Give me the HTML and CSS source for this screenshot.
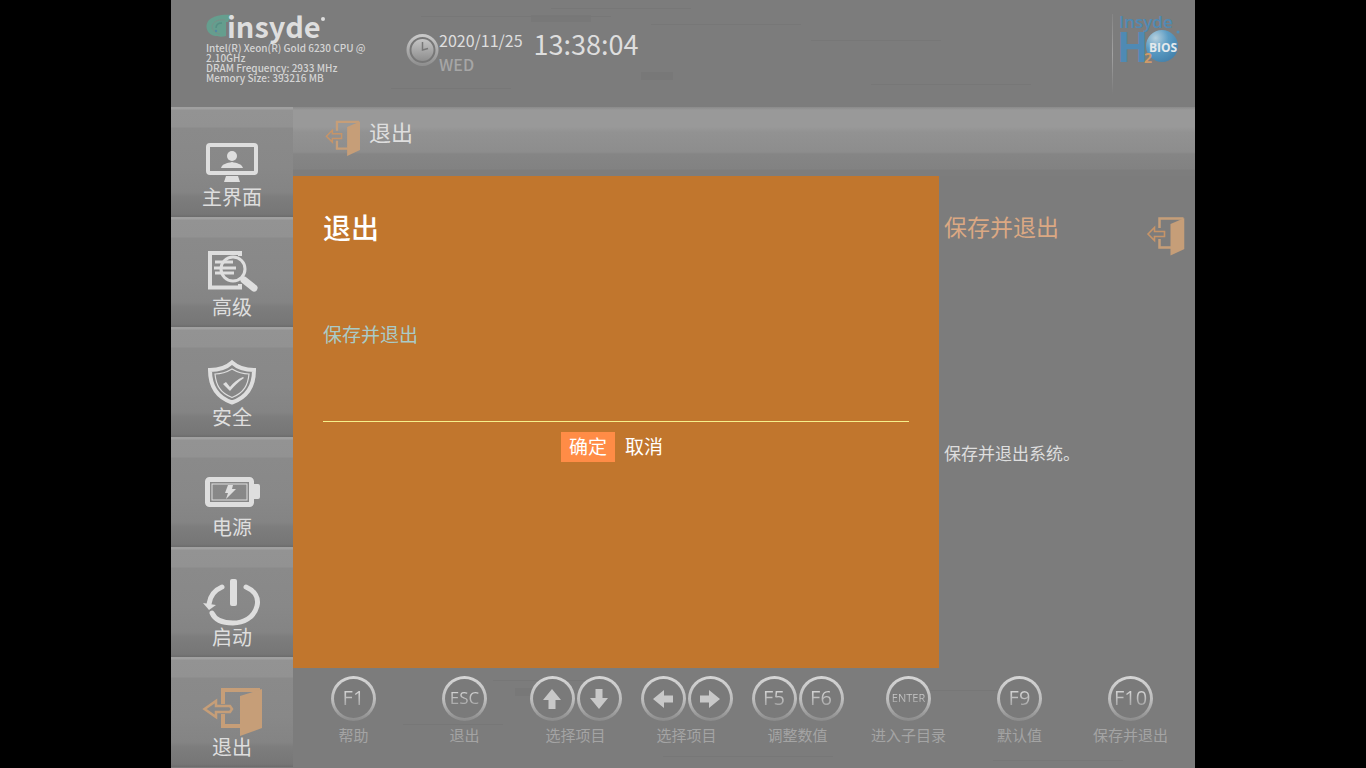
FILE: index.html
```html
<!DOCTYPE html>
<html lang="zh-CN">
<head>
<meta charset="utf-8">
<meta name="viewport" content="width=device-width, initial-scale=1">
<title>退出</title>
<link rel="stylesheet" href="styles.css">
</head>
<body>
<svg class="defs" width="0" height="0" aria-hidden="true">
  <defs>
    <linearGradient id="silver" x1="0" y1="0" x2="0" y2="1"><stop offset="0" stop-color="#c8c8c8"/><stop offset="1" stop-color="#909090"/></linearGradient>
    <linearGradient id="face" x1="0" y1="0" x2="0" y2="1"><stop offset="0" stop-color="#c4c4c4"/><stop offset="1" stop-color="#8e8e8e"/></linearGradient>
    <radialGradient id="ball" cx=".3" cy=".25" r=".8"><stop offset="0" stop-color="#b5cfdd"/><stop offset=".5" stop-color="#5b9cc4"/><stop offset="1" stop-color="#4583ad"/></radialGradient>
    <symbol id="door" viewBox="0 0 38 40">
      <path d="M13 12V2.500H37M13 23V31.500H25" fill="none" stroke="#c69e78" stroke-width="2.500"/>
      <path d="M24 8L38 2V33L24 39.500Z" fill="#c69e78"/>
      <path d="M1.500 18L8 11.500V15.500H18V20.500H8V24.500Z" fill="none" stroke="#c69468" stroke-width="1.600"/>
    </symbol>
    <symbol id="arrow" viewBox="0 0 20 20"><path d="M10 0L19 11H13.500V20H6.500V11H1Z"/></symbol>
  </defs>
</svg>
<div class="bios">
  <header class="top">
    <div class="brand">
      <div class="logo">
        <svg class="logo-mark" viewBox="0 0 28 28" aria-hidden="true"><path d="M27 1C18 0 8 1 3 6C-2 12 1 19 7 21.500C12 23 17 23 20 22V8H22C23 5 25 4 27 4Z" fill="#659e8e"/><path d="M19 6C12 5 7 8 6 12C6 16 9 19 14 20" fill="none" stroke="#7a8f88" stroke-width="1"/><path d="M16 9C11 9 10 12 10 14" fill="none" stroke="#568f84" stroke-width="1.500"/><circle cx="10" cy="17" r="1.200" fill="#5289a5"/></svg>
        <span class="logo-name">insyde</span><span class="logo-dot"></span>
      </div>
      <p class="spec">Intel(R) Xeon(R) Gold 6230 CPU @ 2.10GHz<br>DRAM Frequency: 2933 MHz<br>Memory Size: 393216 MB</p>
    </div>
    <svg class="clock" viewBox="0 0 33 34" aria-hidden="true"><circle cx="16.500" cy="17" r="14.500" fill="#777" stroke="url(#silver)" stroke-width="3"/><circle cx="16.500" cy="17" r="11" fill="url(#face)"/><path d="M16.500 9V17L22 15.500" fill="none" stroke="#777" stroke-width="1.500"/></svg>
    <div class="date"><span>2020/11/25</span><span class="weekday">WED</span></div>
    <time class="time">13:38:04</time>
    <div class="product">
      <svg viewBox="0 0 66 60" role="img" aria-label="Insyde H2O BIOS">
        <text x="0" y="18" class="p-name">Insyde</text>
        <text x="-2" y="52" class="p-h">H</text>
        <circle cx="43" cy="36" r="16" fill="url(#ball)"/>
        <circle cx="59" cy="22" r="1.500" fill="#4f8db8"/>
        <text x="30" y="42" class="p-bios">BIOS</text>
        <text x="25" y="53" class="p-two">2</text>
      </svg>
    </div>
  </header>

  <nav class="side">
    <a href="#main"><svg viewBox="0 0 60 50"><rect x="6" y="8" width="48" height="28" rx="2" fill="none" stroke="#dedede" stroke-width="4"/><circle cx="30" cy="19" r="5"/><path d="M19 31C20 27 25 26 30 25C35 26 40 27 41 31ZM24 39H36L38 45H22Z"/></svg><span>主界面</span></a>
    <a href="#advanced"><svg viewBox="0 0 60 50"><g fill="none" stroke="#dedede"><path d="M38 9V6H8V40.500H38V37" stroke-width="4"/><circle cx="31" cy="22" r="12" stroke-width="3"/><path d="M13 15H31M12 21H34M13 26H32" stroke-width="3"/><path d="M42 33L52 41" stroke-width="7" stroke-linecap="round"/></g></svg><span>高级</span></a>
    <a href="#security"><svg viewBox="0 0 60 50"><g fill="none" stroke="#dedede"><path d="M30 5.500C24 11 16 13 8 13C8 29 14 40 30 45.500C46 40 52 29 52 13C44 13 36 11 30 5.500Z" stroke-width="4"/><path d="M30 12C25 15 19 17 13 17C14 28 18 36 30 40.500C42 36 46 28 47 17C41 17 35 15 30 12Z" stroke-width="1.200"/></g><path d="M21 27L24 25L28 30C31 26 36 22 41 20L42 21C36 25 32 29 28 34Z"/></svg><span>安全</span></a>
    <a href="#power"><svg viewBox="0 0 60 50"><g fill="none" stroke="#dedede"><rect x="5.500" y="12.500" width="44" height="25" rx="2" stroke-width="5"/><rect x="10" y="17" width="35" height="16" stroke-width="1"/></g><path d="M52 17H56Q58 17 58 19V30Q58 32 56 32H52ZM26 18H31L30 22H34L24 32L26 26H23Z"/></svg><span>电源</span></a>
    <a href="#boot"><svg viewBox="0 0 60 50"><g fill="none" stroke="#dedede" stroke-width="5" stroke-linecap="round"><path d="M44 10C53 14 57 21 55 29C52 41 41 46 31 46C21 46 13 43 10 36"/><path d="M20 10C13 13 8 19 7 27"/></g><rect x="28" y="2" width="7" height="27" rx="2"/><path d="M1 26L14 28L7 33Z"/></svg><span>启动</span></a>
    <a href="#exit" aria-current="page"><svg viewBox="0 0 60 50"><path d="M21 17V3H58M21 27V39H39" fill="none" stroke="#c69e78" stroke-width="4"/><path d="M38 9L60 2V41L38 49Z" fill="#c69e78"/><path d="M2.500 22L14 14V19H28L30 22L28 25H14V30Z" fill="none" stroke="#c69e78" stroke-width="2.500"/></svg><span>退出</span></a>
  </nav>

  <div class="title-bar"><svg viewBox="0 0 38 40" aria-hidden="true"><use href="#door"/></svg><h1>退出</h1></div>

  <main class="work">
    <section class="dialog" role="dialog" aria-labelledby="dialog-title">
      <h2 id="dialog-title">退出</h2>
      <p>保存并退出</p>
      <div class="actions"><button type="button" class="ok">确定</button><button type="button">取消</button></div>
    </section>
    <aside class="help">
      <div class="help-head"><h2>保存并退出</h2><svg viewBox="0 0 38 40" aria-hidden="true"><use href="#door"/></svg></div>
      <p>保存并退出系统。</p>
    </aside>
  </main>

  <footer class="keys">
    <div class="key"><div><button type="button"><span>F1</span></button></div><span class="label">帮助</span></div>
    <div class="key"><div><button type="button"><span class="mid">ESC</span></button></div><span class="label">退出</span></div>
    <div class="key"><div><button type="button" aria-label="上"><svg viewBox="0 0 20 20"><use href="#arrow"/></svg></button><button type="button" aria-label="下"><svg class="down" viewBox="0 0 20 20"><use href="#arrow"/></svg></button></div><span class="label">选择项目</span></div>
    <div class="key"><div><button type="button" aria-label="左"><svg class="left" viewBox="0 0 20 20"><use href="#arrow"/></svg></button><button type="button" aria-label="右"><svg class="right" viewBox="0 0 20 20"><use href="#arrow"/></svg></button></div><span class="label">选择项目</span></div>
    <div class="key"><div><button type="button"><span>F5</span></button><button type="button"><span>F6</span></button></div><span class="label">调整数值</span></div>
    <div class="key"><div><button type="button"><span class="small">ENTER</span></button></div><span class="label">进入子目录</span></div>
    <div class="key"><div><button type="button"><span>F9</span></button></div><span class="label">默认值</span></div>
    <div class="key"><div><button type="button"><span>F10</span></button></div><span class="label">保存并退出</span></div>
  </footer>
</div>
</body>
</html>
```
FILE: styles.css
```css
* { box-sizing: border-box; }
body {
  margin: 0;
  background: #000;
  font-family: "Noto Sans CJK SC", "Noto Sans", sans-serif;
  color: #dedede;
}
h1, h2, p { margin: 0; font-weight: 400; }
button { font: inherit; color: inherit; border: 0; background: none; padding: 0; cursor: pointer; }
svg { display: block; flex: none; }
.defs { position: absolute; }

.bios {
  max-width: 1024px;
  min-height: 100vh;
  margin: 0 auto;
  display: grid;
  grid-template-columns: 122px minmax(0, 1fr);
  grid-template-rows: 107px 69px 1fr 100px;
  background: #7c7c7c;
  overflow: hidden;
}

/* header */
.top {
  grid-column: 1 / -1;
  display: flex;
  align-items: flex-start;
  padding-left: 35px;
  background:
    linear-gradient(#777, #777) 380px 8px / 140px 1px no-repeat,
    linear-gradient(#777, #777) 250px 16px / 190px 1px no-repeat,
    linear-gradient(#787878, #787878) 360px 15px / 60px 7px no-repeat,
    linear-gradient(#777, #777) 480px 24px / 150px 1px no-repeat,
    linear-gradient(#787878, #787878) 470px 72px / 32px 8px no-repeat,
    linear-gradient(#777, #777) 220px 88px / 120px 1px no-repeat,
    linear-gradient(#777, #777) 640px 40px / 130px 1px no-repeat,
    linear-gradient(#777, #777) 700px 84px / 160px 1px no-repeat,
    #7c7c7c;
}
.brand { width: 170px; margin-right: 30px; padding-top: 8px; }
.logo { display: flex; height: 35px; }
.logo-mark { width: 28px; height: 28px; margin: 6px -7px 0 0; }
.logo-name { font-size: 29px; line-height: 35px; font-weight: 700; }
.logo-dot { width: 4px; height: 4px; margin-top: 9px; border-radius: 50%; background: #dedede; }
.spec { font-size: 10px; line-height: 10px; font-weight: 500; color: #d4d4d4; }
.clock { width: 33px; height: 34px; margin-top: 33px; }
.date { display: flex; flex-direction: column; margin: 28px 11px 0 0; font-size: 16px; line-height: 24px; }
.weekday { color: #a6a6a6; font-weight: 500; }
.time { margin-top: 28px; font-size: 27px; line-height: 32px; }
.product {
  margin: 14px 10px 0 auto;
  padding-left: 7px;
  height: 80px;
  background: linear-gradient(#858585, #a2a2a2, #7c7c7c) left / 1px 100% no-repeat;
}
.product svg { width: 66px; height: 60px; margin-top: -4px; overflow: visible; }
.p-name { font: 600 17px "Open Sans", sans-serif; fill: #4f8ab4; }
.p-h { font: 700 41px "Open Sans", sans-serif; fill: #4f8ab4; }
.p-bios { font: 700 12px "Open Sans", sans-serif; fill: #e4e9ec; }
.p-two { font: 700 14px "Open Sans", sans-serif; fill: #cf9a68; }

/* side navigation */
.side { grid-row: 2 / -1; display: flex; flex-direction: column; }
.side a {
  display: flex;
  flex-direction: column;
  align-items: center;
  height: 110px;
  padding-top: 30px;
  color: inherit;
  text-decoration: none;
  font-size: 20px;
  line-height: 20px;
  background: linear-gradient(#a0a0a0 0 2px, #939393 3px, #929292 20px, #8a8a8a 21px, #888 60px, #848484 85px, #7d7d7d 90px, #767676 107px, #6c6c6c);
}
.side svg { width: 60px; height: 50px; fill: #dedede; }

/* page title */
.title-bar {
  display: flex;
  align-items: flex-start;
  padding: 12px 32px 0;
  background: linear-gradient(#8a8a8a, #999 3px, #999 20px, #929292 25px, #8d8d8d 45px, #858585 47px, #828282 62px, #7d7d7d 63px);
}
.title-bar svg { width: 35px; height: 38px; }
.title-bar h1 { margin-left: 9px; font-size: 22px; line-height: 24px; }

/* dialog and help */
.work { display: grid; grid-template-columns: minmax(0, 1fr) 256px; }
.dialog { padding: 32px 30px 0; background: #c1762d; color: #fff; }
.dialog h2 { font-size: 28px; line-height: 38px; font-weight: 500; }
.dialog p { margin-top: 76px; font-size: 19px; line-height: 24px; color: #a9cbc8; }
.actions {
  display: flex;
  justify-content: center;
  gap: 2px;
  margin-top: 75px;
  padding-top: 10px;
  border-top: 1px solid #f6f08a;
}
.actions button {
  display: flex;
  align-items: flex-start;
  height: 30px;
  padding: 0 8px;
  font-size: 19px;
  line-height: 28px;
}
.actions .ok { background: #ff8c46; }
.help { padding: 40px 10px 0 5px; }
.help-head { display: flex; justify-content: space-between; }
.help-head h2 { font-size: 23px; line-height: 20px; color: #dba883; }
.help-head svg { width: 39px; height: 40px; }
.help p { margin-top: 185px; font-size: 17px; line-height: 24px; }

/* function keys */
.keys {
  grid-column: 2;
  display: grid;
  grid-template-columns: repeat(8, 1fr);
  align-items: start;
  padding: 8px 9px 0 5px;
  background:
    linear-gradient(#777, #777) 200px 12px / 120px 1px no-repeat,
    linear-gradient(#787878, #787878) 222px 20px / 30px 8px no-repeat,
    linear-gradient(#777, #777) 110px 56px / 100px 1px no-repeat,
    linear-gradient(#777, #777) 370px 88px / 170px 1px no-repeat,
    linear-gradient(#777, #777) 620px 22px / 90px 1px no-repeat,
    linear-gradient(#777, #777) 700px 92px / 130px 1px no-repeat,
    #7c7c7c;
}
.key { display: flex; flex-direction: column; align-items: center; }
.key div { display: flex; gap: 2px; }
.key button {
  display: grid;
  place-items: center;
  width: 45px;
  height: 45px;
  border: 3px solid transparent;
  border-radius: 50%;
  background: linear-gradient(#7a7a7a, #7a7a7a) padding-box, linear-gradient(#d6d6d6, #bcbcbc 55%, #8a8a8a) border-box;
}
.key button span {
  font-family: "Open Sans", "Noto Sans", sans-serif;
  font-size: 20px;
  line-height: 30px;
  padding-bottom: 2px;
  background: linear-gradient(#d0d0d0 30%, #9c9c9c 80%);
  background-clip: text;
  color: transparent;
}
.key button .mid { font-size: 17px; }
.key button .small { font-size: 11px; }
.key svg { width: 20px; height: 20px; fill: #c8c8c8; }
.down { transform: rotate(180deg); }
.left { transform: rotate(-90deg); }
.right { transform: rotate(90deg); }
.label { margin-top: 4px; font-size: 15px; line-height: 20px; color: #a4a4a4; white-space: nowrap; }
```
